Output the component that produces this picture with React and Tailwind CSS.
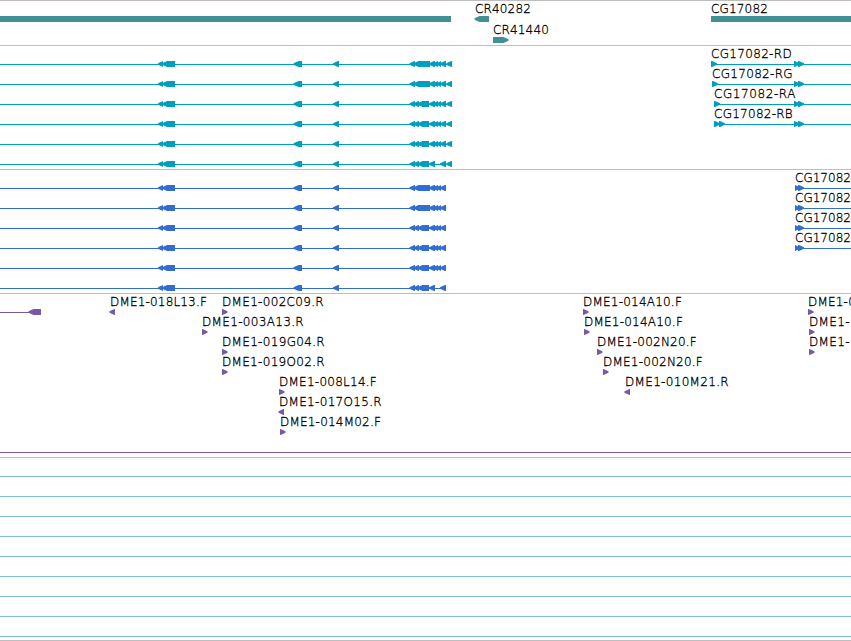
import React from "react";

const LABEL =
  "absolute whitespace-pre font-['DejaVu_Sans',sans-serif] text-[12px] leading-[14px] font-extralight text-black [-webkit-text-stroke:0.3px_black]";

// Exon with its arrow head on the left and a blunt right edge.
function leftPath(x1, x2, y) {
  const t = Math.min(5, x2 - x1);
  return `M${x1} ${y + 2.2}L${x1 + t} ${y}H${x2}V${y + 6}H${x1 + t}L${x1} ${y + 3.8}Z`;
}

function rightPath(x1, x2, y) {
  const t = Math.min(5, x2 - x1);
  return `M${x1} ${y}H${x2 - t}L${x2} ${y + 2.2}V${y + 3.8}L${x2 - t} ${y + 6}H${x1}Z`;
}

function Exons({ left = [], right = [], y, color }) {
  return (
    <>
      {left.map(([a, b]) => (
        <path key={"l" + a} d={leftPath(a, b, y)} fill={color} />
      ))}
      {right.map(([a, b]) => (
        <path key={"r" + a} d={rightPath(a, b, y)} fill={color} />
      ))}
    </>
  );
}

function Track({ height, labels = [], children }) {
  const box = { height };
  return (
    <section
      className="relative w-full shrink-0 overflow-hidden border-t border-[#bebebe]"
      style={box}
    >
      <svg width="851" height={height - 1} className="block">
        {children}
      </svg>
      {labels.map(([text, left, top, width]) => (
        <Label key={text + left + top} text={text} left={left} top={top} width={width} />
      ))}
    </section>
  );
}

function Label({ text, left, top, width }) {
  const ref = React.useRef(null);
  const [spacing, setSpacing] = React.useState(0);
  React.useLayoutEffect(() => {
    if (width) setSpacing((width - ref.current.getBoundingClientRect().width) / text.length);
  }, []);
  return (
    <span ref={ref} className={LABEL} style={{ left, top, letterSpacing: spacing }}>
      {text}
    </span>
  );
}

const HEAD = [[158, 163], [162, 175], [293.5, 302], [333, 339]];
const WIDE = [[409.5, 415], [413.5, 430]];
const SPLIT = [[409.5, 415], [413.5, 419], [417.5, 429]];
const TAIL = [[429, 435], [433, 438], [436.5, 441], [440, 446]];
const LAST = [446.3, 452];

const TEAL_ROWS = [
  [...HEAD, ...WIDE, ...TAIL, LAST],
  [...HEAD, ...WIDE, ...TAIL, LAST],
  [...HEAD, ...SPLIT, ...TAIL, LAST],
  [...HEAD, ...SPLIT, ...TAIL, LAST],
  [...HEAD, ...SPLIT, ...TAIL, LAST],
  [...HEAD, ...SPLIT, [429, 435], [440, 446], LAST],
];
const BLUE_ROWS = [
  [...HEAD, ...WIDE, ...TAIL],
  [...HEAD, ...WIDE, ...TAIL],
  [...HEAD, ...SPLIT, ...TAIL],
  [...HEAD, ...SPLIT, ...TAIL],
  [...HEAD, ...SPLIT, ...TAIL],
  [...HEAD, ...SPLIT, [429, 435], [440, 446]],
];
const TEAL_RIGHT = [
  [711, [[711, 717], [794, 799.5], [798, 804]]],
  [712, [[712, 718], [794, 799.5], [798, 804]]],
  [714, [[714, 720], [794, 799.5], [798, 804]]],
  [714, [[714, 720], [719, 725], [794, 799.5], [798, 804]]],
];

const READS = [
  ["DME1-018L13.F", 110, 0, "l", 97],
  ["DME1-002C09.R", 222, 0, "r", 102],
  ["DME1-003A13.R", 202, 1, "r", 102],
  ["DME1-019G04.R", 222, 2, "r", 103],
  ["DME1-019O02.R", 222, 3, "r", 103],
  ["DME1-008L14.F", 279, 4, "r", 98],
  ["DME1-017O15.R", 279, 5, "l", 103],
  ["DME1-014M02.F", 280, 6, "r", 101],
  ["DME1-014A10.F", 583, 0, "r", 99],
  ["DME1-014A10.F", 584, 1, "r", 99],
  ["DME1-002N20.F", 597, 2, "r", 100],
  ["DME1-002N20.F", 603, 3, "r", 100],
  ["DME1-010M21.R", 625, 4, "l", 104],
  ["DME1-0", 808, 0, "r", 48],
  ["DME1-", 809, 1, "r", 41],
  ["DME1-", 809, 2, "r", 41],
];

const TEAL = "#009fc0";
const BLUE = "#326dd0";
const GENE = "#409095";
const PURPLE = "#7859a9";

export default function App() {
  return (
    <main className="flex h-[641px] w-[851px] flex-col overflow-hidden bg-white">
      <Track
        height={45}
        labels={[
          ["CR40282", 475, 1, 56],
          ["CR41440", 493, 22, 56],
          ["CG17082", 711, 1, 57],
        ]}
      >
        <rect x="0" y="15" width="451" height="6" fill={GENE} />
        <rect x="711" y="15" width="140" height="6" fill={GENE} />
        <path d={leftPath(474.5, 489, 15)} fill={GENE} />
        <path d={rightPath(493, 508.5, 36)} fill={GENE} />
      </Track>

      <Track
        height={124}
        labels={[
          ["CG17082-RD", 711, 1, 81],
          ["CG17082-RG", 712, 21, 81],
          ["CG17082-RA", 714, 41, 82],
          ["CG17082-RB", 714, 61, 79],
        ]}
      >
        {TEAL_ROWS.map((row, i) => (
          <g key={i}>
            <rect x="0" y={18 + i * 20} width="450" height="1" fill={TEAL} />
            <Exons left={row} y={15 + i * 20} color={TEAL} />
          </g>
        ))}
        {TEAL_RIGHT.map(([x, row], i) => (
          <g key={i}>
            <rect x={x} y={18 + i * 20} width={851 - x} height="1" fill={TEAL} />
            <Exons right={row} y={15 + i * 20} color={TEAL} />
          </g>
        ))}
      </Track>

      <Track
        height={124}
        labels={[0, 1, 2, 3].map((i) => ["CG17082", 795, 1 + i * 20, 56])}
      >
        {BLUE_ROWS.map((row, i) => (
          <g key={i}>
            <rect x="0" y={18 + i * 20} width="444" height="1" fill={BLUE} />
            <Exons left={row} y={15 + i * 20} color={BLUE} />
          </g>
        ))}
        {[0, 1, 2, 3].map((i) => (
          <g key={i}>
            <rect x="796" y={18 + i * 20} width="55" height="1" fill={BLUE} />
            <Exons right={[[795, 800], [798, 804]]} y={15 + i * 20} color={BLUE} />
          </g>
        ))}
      </Track>

      <Track
        height={164}
        labels={READS.map(([text, x, row, , w]) => [text, x, 1 + row * 20, w])}
      >
        <rect x="0" y="18" width="32" height="1" fill={PURPLE} />
        <path d={leftPath(28.5, 41, 15)} fill={PURPLE} />
        {READS.map(([, x, row, dir], i) => {
          const y = 15 + row * 20;
          return (
            <path
              key={i}
              fill={PURPLE}
              d={dir === "l" ? leftPath(x - 0.5, x + 5, y) : rightPath(x, x + 5.5, y)}
            />
          );
        })}
        <rect x="0" y="158" width="851" height="1" fill={PURPLE} />
      </Track>

      <Track height={183}>
        {Array.from({ length: 9 }, (_, i) => (
          <rect key={i} x="0" y={18 + i * 20} width="851" height="1" fill="#82bbe0" />
        ))}
      </Track>
      <div className="h-px w-full shrink-0 bg-[#bebebe]" />
    </main>
  );
}
